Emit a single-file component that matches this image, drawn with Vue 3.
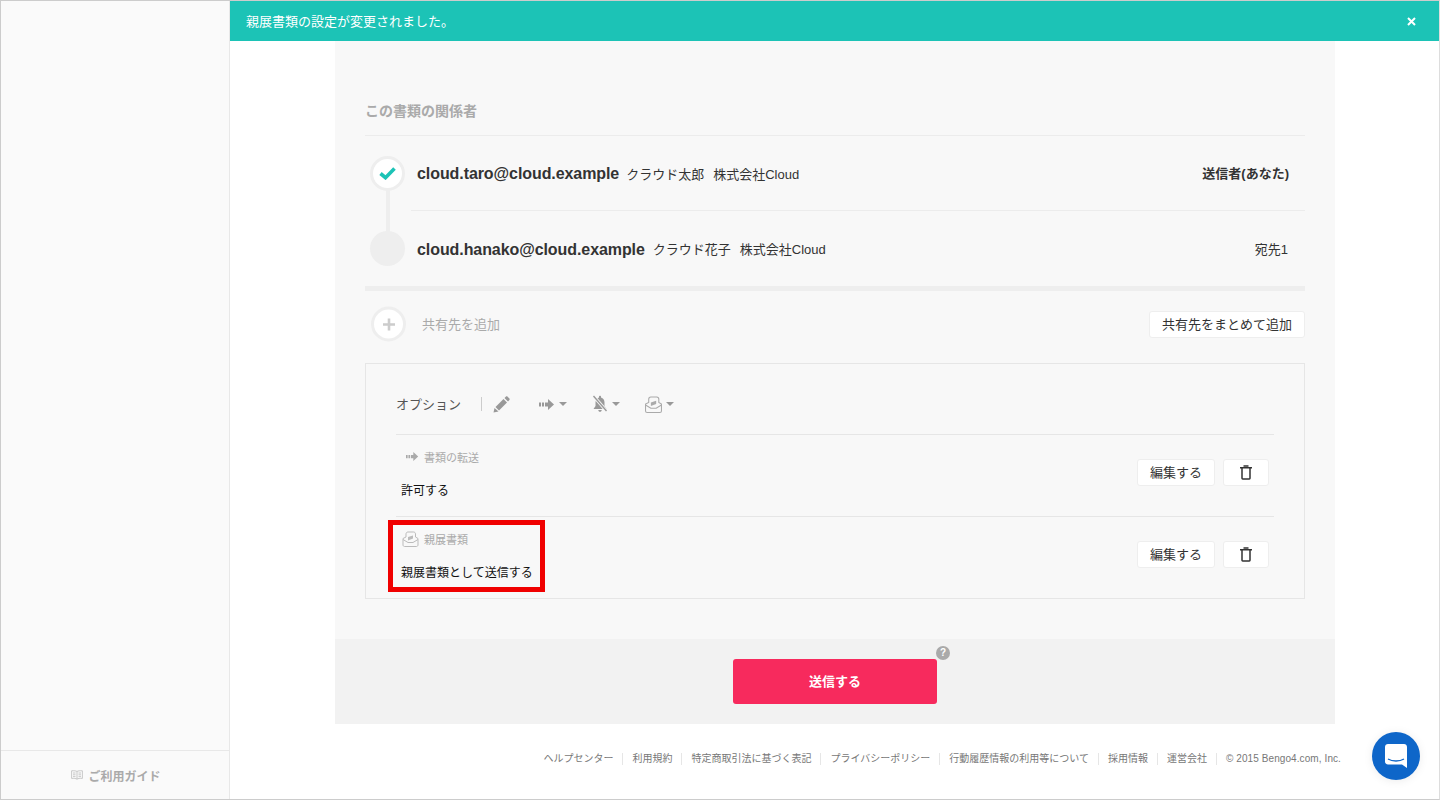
<template>
  <div class="page">
    <aside class="side">
      <div class="side-space"></div>
      <div class="guide">
        <svg class="guide-icon" width="12" height="10" viewBox="0 0 12 10">
          <path d="M6 1.500C5 .8 3 .6 .6 .8v7.600c2.400-.2 4.400 0 5.400.8 1-.8 3-1 5.400-.8V.8C9 .6 7 .8 6 1.500zM6 1.500v7.700M2 3h2.500M2 4.800h2.500M2 6.600h2.500M7.500 3H10M7.500 4.800H10M7.500 6.600H10" fill="none" stroke="#bbb" stroke-width=".8" />
        </svg>
        <span>ご利用ガイド</span>
      </div>
    </aside>

    <div class="main">
      <div class="notice">
        <span>親展書類の設定が変更されました。</span>
        <svg class="notice-close" width="9" height="9" viewBox="0 0 9 9">
          <path d="M1 1l7 7M8 1L1 8" stroke="#fff" stroke-width="2" />
        </svg>
      </div>

      <div class="content">
        <section class="panel">
          <h2 class="panel-title">この書類の関係者</h2>

          <div class="people">
            <div class="person" v-for="(p, i) in people" :key="p.email">
              <div class="marker" :class="{ done: p.done }">
                <svg v-if="p.done" width="17" height="13" viewBox="0 0 17 13">
                  <path d="M1.500 6.500l5 4.200L15.500 1.500" fill="none" stroke="#1cc3b6" stroke-width="3.600" />
                </svg>
              </div>
              <div class="person-body" :class="{ first: i === 0 }">
                <strong class="email">{{ p.email }}</strong>
                <span class="name">{{ p.name }}</span>
                <span class="name">{{ p.company }}</span>
                <span class="role" :class="{ me: p.done }">{{ p.role }}</span>
              </div>
            </div>
          </div>

          <div class="add-row">
            <div class="add-left">
              <div class="marker plus">
                <svg width="14" height="14" viewBox="0 0 14 14">
                  <path d="M7 1v12M1 7h12" stroke="#ccc" stroke-width="2.600" />
                </svg>
              </div>
              <span class="add-label">共有先を追加</span>
            </div>
            <button class="btn">共有先をまとめて追加</button>
          </div>

          <div class="options">
            <div class="options-head">
              <span class="options-label">オプション</span>
              <span class="options-sep"></span>
              <svg class="tool" width="17" height="17" viewBox="0 0 17 17">
                <path d="M.5 16.500l1-4.500 4 3.500zM2.500 11l8-8 3.500 3.500-8 8zM11.500 2l1.500-1.500c.5-.4 1-.4 1.400 0l2 2c.4.4.4 1 0 1.400L15 5.500z" fill="#999" />
              </svg>
              <span class="tool-group forward">
                <svg width="16" height="11" viewBox="0 0 16 11">
                  <path d="M0 3.500h2v4H0zM3 3.500h2v4H3zM6 3.500h3V0l6 5.500L9 11V7.500H6z" fill="#999" />
                </svg>
                <i class="caret"></i>
              </span>
              <span class="tool-group bell">
                <svg width="16" height="18" viewBox="0 0 16 18">
                  <path d="M8 .8c-.6 0-1 .4-1 1v.8C4.800 3.200 3.500 5 3.500 7.500V11L1.500 14h13l-2-3V7.500c0-2.500-1.300-4.300-3.500-4.900v-.8c0-.6-.4-1-1-1zM6.300 15h3.400c0 1-.7 1.800-1.700 1.800S6.300 16 6.300 15z" fill="#999" />
                  <path d="M1.500 1l13 15" stroke="#f8f8f8" stroke-width="3.200" />
                  <path d="M1.500 1l13 15" stroke="#999" stroke-width="1.400" />
                </svg>
                <i class="caret"></i>
              </span>
              <span class="tool-group secret">
                <svg width="17" height="17" viewBox="0 0 16 16">
                  <path d="M.5 7.500V14c0 .8.700 1.500 1.500 1.500h12c.8 0 1.500-.7 1.500-1.500V7.500L13 6V3c0-1.200-.8-2-2-2H5.500c-1.200 0-2 .8-2 2v3zM.5 8.500l5 3h5l5-3" fill="none" stroke="#aaa" />
                  <path d="M5.500 6l5-1.500v3l-5 2z" fill="#aaa" />
                </svg>
                <i class="caret"></i>
              </span>
            </div>

            <div class="option-row" v-for="o in options" :key="o.label">
              <div class="option-text">
                <div class="option-label">
                  <svg v-if="o.icon === 'forward'" class="option-icon" width="13" height="9" viewBox="0 0 16 11">
                    <path d="M0 3.500h2v4H0zM3 3.500h2v4H3zM6 3.500h3V0l6 5.500L9 11V7.500H6z" fill="#aaa" />
                  </svg>
                  <svg v-else class="option-icon" width="17" height="16" viewBox="0 0 16 16">
                    <path d="M.5 7.500V14c0 .8.700 1.500 1.500 1.500h12c.8 0 1.500-.7 1.500-1.500V7.500L13 6V3c0-1.200-.8-2-2-2H5.500c-1.200 0-2 .8-2 2v3zM.5 8.500l5 3h5l5-3" fill="none" stroke="#bbb" />
                    <path d="M5.500 6l5-1.500v3l-5 2z" fill="#bbb" />
                  </svg>
                  <span>{{ o.label }}</span>
                </div>
                <div class="option-value">{{ o.value }}</div>
                <div v-if="o.marked" class="highlight"></div>
              </div>
              <div class="option-actions">
                <button class="btn small">編集する</button>
                <button class="btn trash" aria-label="削除">
                  <svg width="12" height="15" viewBox="0 0 12 15">
                    <path d="M0 2.800h12M3.500 1h5M2 3v10.300c0 .4.300.7.700.7h6.600c.4 0 .7-.3.700-.7V3" fill="none" stroke="#333" stroke-width="1.500" />
                  </svg>
                </button>
              </div>
            </div>
          </div>
        </section>

        <div class="send-bar">
          <div class="send-wrap">
            <button class="send">送信する</button>
            <span class="help">?</span>
          </div>
        </div>
      </div>

      <footer class="footer">
        <a v-for="l in links" :key="l">{{ l }}</a>
        <span class="copy">© 2015 Bengo4.com, Inc.</span>
      </footer>
    </div>

    <button class="chat" aria-label="チャット">
      <svg width="22" height="24" viewBox="0 0 22 24">
        <path d="M3 0h16c1.700 0 3 1.300 3 3v21l-5-3.500H3c-1.700 0-3-1.300-3-3V3C0 1.300 1.300 0 3 0z" fill="#fff" />
        <path d="M3 15c4.500 2.600 11.500 2.600 16 0" fill="none" stroke="#0e66c9" stroke-width="1.400" />
      </svg>
    </button>
  </div>
</template>

<script setup>
const people = [
  { email: 'cloud.taro@cloud.example', name: 'クラウド太郎', company: '株式会社Cloud', role: '送信者(あなた)', done: true },
  { email: 'cloud.hanako@cloud.example', name: 'クラウド花子', company: '株式会社Cloud', role: '宛先1', done: false }
]

const options = [
  { icon: 'forward', label: '書類の転送', value: '許可する', marked: false },
  { icon: 'secret', label: '親展書類', value: '親展書類として送信する', marked: true }
]

const links = ['ヘルプセンター', '利用規約', '特定商取引法に基づく表記', 'プライバシーポリシー', '行動履歴情報の利用等について', '採用情報', '運営会社']
</script>

<style>
html, body { margin: 0; height: 100%; overflow: hidden; background: #fff; }
</style>

<style scoped>
.page {
  position: relative;
  display: flex;
  width: 1440px;
  height: 800px;
  box-sizing: border-box;
  border: 1px solid #ccc;
  border-right-color: #ddd;
  overflow: hidden;
  font-family: "Liberation Sans", "Noto Sans CJK JP", sans-serif;
  color: #333;
}
.side {
  display: flex;
  flex-direction: column;
  width: 228px;
  flex: none;
  background: #fafafa;
  border-right: 1px solid #e8e8e8;
}
.side-space { flex: 1; }
.guide {
  display: flex;
  align-items: center;
  justify-content: center;
  gap: 5px;
  height: 48px;
  border-top: 1px solid #e8e8e8;
  font-size: 12px;
  font-weight: 700;
  color: #aaa;
  padding-left: 2px;
}
.main {
  display: flex;
  flex-direction: column;
  flex: 1;
  min-width: 0;
}
.notice {
  display: flex;
  align-items: center;
  justify-content: space-between;
  height: 40px;
  flex: none;
  padding: 0 23px 0 16px;
  background: #1cc3b6;
  color: #fff;
  font-size: 13px;
}
.notice span { margin-bottom: 2px; }
.content {
  width: 1000px;
  margin-left: 105px;
  flex: none;
}
.panel {
  padding: 54px 30px 0;
  height: 598px;
  box-sizing: border-box;
  background: #f8f8f8;
}
.panel-title {
  margin: 0;
  height: 41px;
  box-sizing: border-box;
  border-bottom: 1px solid #ececec;
  font-size: 14px;
  font-weight: 700;
  line-height: 32px;
  color: #aaa;
}
.people {
  border-bottom: 5px solid #eee;
}
.person {
  position: relative;
  display: flex;
  align-items: stretch;
  height: 75px;
}
.person:first-child::after {
  content: "";
  position: absolute;
  left: 21px;
  top: 50px;
  width: 4px;
  height: 50px;
  background: #eee;
}
.marker {
  position: absolute;
  left: 5px;
  top: 20px;
  z-index: 1;
  display: flex;
  align-items: center;
  justify-content: center;
  width: 35px;
  height: 35px;
  border-radius: 50%;
  background: #eee;
}
.marker.done,
.marker.plus {
  box-sizing: border-box;
  background: #fff;
  border: 3px solid #eee;
}
.person-body {
  display: flex;
  align-items: center;
  flex: 1;
  margin-left: 46px;
  padding: 0 17px 0 6px;
  font-size: 13px;
}
.person-body.first {
  border-bottom: 1px solid #ececec;
}
.email {
  font-size: 16px;
  letter-spacing: -.08px;
  margin: 2px 8px 0 0;
}
.name { margin-right: 9px; }
.person-body.first .name { margin-left: -1px; margin-right: 10px; }
.role {
  margin-left: auto;
  font-size: 13px;
}
.role.me { font-weight: 700; margin-right: -1px; margin-bottom: 2px; }
.add-row {
  display: flex;
  align-items: center;
  justify-content: space-between;
  height: 72px;
  box-sizing: border-box;
  padding-bottom: 6px;
}
.add-left {
  position: relative;
  display: flex;
  align-items: center;
  padding-left: 57px;
}
.add-left .marker {
  left: 6px;
  top: 50%;
  transform: translateY(-50%);
}
.add-label {
  margin-bottom: 2px;
  font-size: 13px;
  color: #aaa;
}
.btn {
  height: 27px;
  padding: 0 12px 2px;
  background: #fff;
  border: 1px solid #eee;
  border-radius: 3px;
  font: inherit;
  font-size: 13px;
  color: #333;
}
.options {
  height: 236px;
  box-sizing: border-box;
  padding: 0 30px;
  border: 1px solid #e6e6e6;
}
.options-head {
  display: flex;
  align-items: center;
  height: 60px;
  padding-top: 10px;
  border-bottom: 1px solid #e6e6e6;
}
.options-label {
  margin-bottom: 2px;
  font-size: 13px;
  color: #555;
}
.options-sep {
  width: 1px;
  height: 14px;
  margin: 0 11px 0 20px;
  background: #ccc;
}
.tool-group {
  display: flex;
  align-items: center;
  gap: 4px;
}
.forward { margin-left: 29px; }
.bell { margin-left: 25px; }
.secret { margin-left: 25px; }
.caret {
  width: 0;
  height: 0;
  border-left: 4px solid transparent;
  border-right: 4px solid transparent;
  border-top: 4px solid #999;
}
.option-row {
  display: flex;
  align-items: center;
  justify-content: space-between;
  height: 81px;
  padding-right: 5px;
  border-bottom: 1px solid #e6e6e6;
}
.option-row:last-child { border-bottom: 0; }
.option-text {
  position: relative;
  padding: 0 0 4px 5px;
}
.option-label {
  display: grid;
  grid-template-columns: 18px auto;
  align-items: center;
  column-gap: 5px;
  height: 16px;
  font-size: 11px;
  color: #aaa;
}
.option-icon { justify-self: end; }
.option-value {
  margin-top: 18px;
  font-size: 12px;
  line-height: 16px;
  color: #111;
}
.highlight {
  position: absolute;
  left: -8px;
  top: -11px;
  width: 157px;
  height: 72px;
  box-sizing: border-box;
  border: 5px solid #f00000;
  pointer-events: none;
}
.option-actions {
  display: flex;
  gap: 8px;
  padding-bottom: 7px;
}
.btn.small { width: 78px; padding: 0 0 2px; }
.btn.trash {
  display: flex;
  align-items: center;
  justify-content: center;
  width: 46px;
  padding: 0;
}
.send-bar {
  display: flex;
  justify-content: center;
  height: 85px;
  box-sizing: border-box;
  padding-top: 20px;
  background: #f2f2f2;
}
.send-wrap { position: relative; height: 45px; }
.send {
  width: 204px;
  height: 45px;
  padding-bottom: 3px;
  border: 0;
  border-radius: 3px;
  background: #f72a5d;
  color: #fff;
  font: inherit;
  font-size: 13px;
  font-weight: 700;
}
.help {
  position: absolute;
  right: -13px;
  top: -13px;
  width: 14px;
  height: 14px;
  border-radius: 50%;
  background: #aaa;
  color: #fff;
  font-size: 10px;
  font-weight: 700;
  line-height: 14px;
  text-align: center;
}
.footer {
  display: flex;
  align-items: center;
  justify-content: flex-end;
  flex: 1;
  padding: 0 98px 6px 0;
  font-size: 10px;
  color: #777;
}
.footer a {
  padding-right: 9px;
  margin-right: 9px;
  border-right: 1px solid #e6e6e6;
  line-height: 12px;
}
.copy { white-space: nowrap; letter-spacing: .09px; }
.chat {
  position: absolute;
  right: 19px;
  bottom: 19px;
  display: flex;
  align-items: center;
  justify-content: center;
  width: 48px;
  height: 48px;
  padding: 0;
  border: 0;
  border-radius: 50%;
  background: #0e66c9;
  box-shadow: 0 1px 10px rgba(0, 0, 0, .08);
}
</style>
